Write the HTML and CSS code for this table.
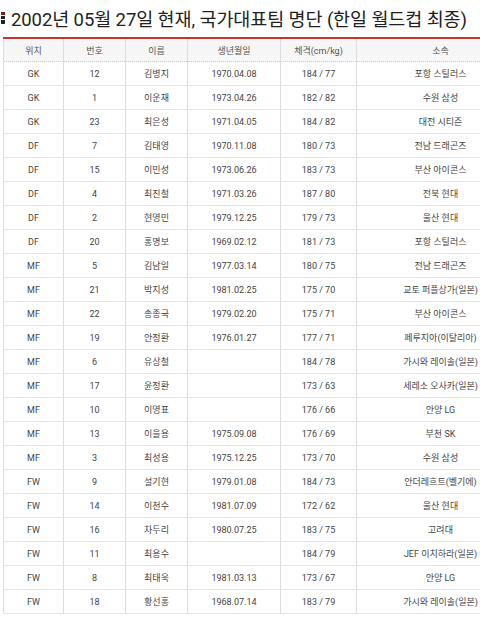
FILE: index.html
```html
<!DOCTYPE html>
<html lang="ko">
<head>
<meta charset="utf-8">
<link rel="stylesheet" href="styles.css">
</head>
<body>
<div class="page">
  <h1 class="title"><span class="bullet"></span>2002년 05월 27일 현재, 국가대표팀 명단 (한일 월드컵 최종)</h1>
  <table class="roster">
    <colgroup>
      <col class="c1"><col class="c2"><col class="c3"><col class="c4"><col class="c5"><col class="c6">
    </colgroup>
    <thead>
      <tr><th>위치</th><th>번호</th><th>이름</th><th>생년월일</th><th>체격(cm/kg)</th><th>소속</th></tr>
    </thead>
    <tbody>
      <tr><td>GK</td><td>12</td><td>김병지</td><td>1970.04.08</td><td>184 / 77</td><td>포항 스틸러스</td></tr>
      <tr><td>GK</td><td>1</td><td>이운재</td><td>1973.04.26</td><td>182 / 82</td><td>수원 삼성</td></tr>
      <tr><td>GK</td><td>23</td><td>최은성</td><td>1971.04.05</td><td>184 / 82</td><td>대전 시티즌</td></tr>
      <tr><td>DF</td><td>7</td><td>김태영</td><td>1970.11.08</td><td>180 / 73</td><td>전남 드래곤즈</td></tr>
      <tr><td>DF</td><td>15</td><td>이민성</td><td>1973.06.26</td><td>183 / 73</td><td>부산 아이콘스</td></tr>
      <tr><td>DF</td><td>4</td><td>최진철</td><td>1971.03.26</td><td>187 / 80</td><td>전북 현대</td></tr>
      <tr><td>DF</td><td>2</td><td>현영민</td><td>1979.12.25</td><td>179 / 73</td><td>울산 현대</td></tr>
      <tr><td>DF</td><td>20</td><td>홍명보</td><td>1969.02.12</td><td>181 / 73</td><td>포항 스틸러스</td></tr>
      <tr><td>MF</td><td>5</td><td>김남일</td><td>1977.03.14</td><td>180 / 75</td><td>전남 드래곤즈</td></tr>
      <tr><td>MF</td><td>21</td><td>박지성</td><td>1981.02.25</td><td>175 / 70</td><td>교토 퍼플상가(일본)</td></tr>
      <tr><td>MF</td><td>22</td><td>송종국</td><td>1979.02.20</td><td>175 / 71</td><td>부산 아이콘스</td></tr>
      <tr><td>MF</td><td>19</td><td>안정환</td><td>1976.01.27</td><td>177 / 71</td><td>페루지아(이탈리아)</td></tr>
      <tr><td>MF</td><td>6</td><td>유상철</td><td></td><td>184 / 78</td><td>가시와 레이솔(일본)</td></tr>
      <tr><td>MF</td><td>17</td><td>윤정환</td><td></td><td>173 / 63</td><td>세레소 오사카(일본)</td></tr>
      <tr><td>MF</td><td>10</td><td>이영표</td><td></td><td>176 / 66</td><td>안양 LG</td></tr>
      <tr><td>MF</td><td>13</td><td>이을용</td><td>1975.09.08</td><td>176 / 69</td><td>부천 SK</td></tr>
      <tr><td>MF</td><td>3</td><td>최성용</td><td>1975.12.25</td><td>173 / 70</td><td>수원 삼성</td></tr>
      <tr><td>FW</td><td>9</td><td>설기현</td><td>1979.01.08</td><td>184 / 73</td><td>안더레흐트(벨기에)</td></tr>
      <tr><td>FW</td><td>14</td><td>이천수</td><td>1981.07.09</td><td>172 / 62</td><td>울산 현대</td></tr>
      <tr><td>FW</td><td>16</td><td>차두리</td><td>1980.07.25</td><td>183 / 75</td><td>고려대</td></tr>
      <tr><td>FW</td><td>11</td><td>최용수</td><td></td><td>184 / 79</td><td>JEF 이치하라(일본)</td></tr>
      <tr><td>FW</td><td>8</td><td>최태욱</td><td>1981.03.13</td><td>173 / 67</td><td>안양 LG</td></tr>
      <tr><td>FW</td><td>18</td><td>황선홍</td><td>1968.07.14</td><td>183 / 79</td><td>가시와 레이솔(일본)</td></tr>
    </tbody>
  </table>
</div>
</body>
</html>
```
FILE: styles.css
```css
html, body {
  margin: 0;
  padding: 0;
  background: #fff;
}
body {
  width: 480px;
  height: 620px;
  overflow: hidden;
  font-family: Roboto, "Noto Sans CJK KR", sans-serif;
}
.page {
  width: 540px;
  padding-left: 3px;
}
.title {
  display: flex;
  align-items: center;
  height: 37px;
  margin: 0 0 0 -2px;
  font-size: 18.5px;
  font-weight: 400;
  color: #222;
  letter-spacing: -0.1px;
  box-sizing: border-box;
  padding-bottom: 2px;
  white-space: nowrap;
}
.bullet {
  display: inline-block;
  flex: none;
  width: 4px;
  height: 12px;
  margin-right: 6px;
  background: linear-gradient(#7a1a1a 0, #7a1a1a 3px, #fff 3px, #fff 4px, #222 4px, #222 7px, #fff 7px, #fff 8px, #222 8px);
}
.roster {
  border-collapse: collapse;
  table-layout: fixed;
  width: 521px;
  border-top: 2px solid #c8342f;
  border-left: 1px solid #ddd;
  border-bottom: 1px solid #ddd;
}
.c1 { width: 60px; }
.c2 { width: 62px; }
.c3 { width: 62px; }
.c4 { width: 93px; }
.c5 { width: 76px; }
.c6 { width: 168px; }
.roster th {
  height: 22px;
  padding: 0;
  background: #f6f6f6;
  font-size: 9px;
  font-weight: 400;
  color: #555;
  text-align: center;
  border-right: 1px solid #ddd;
  border-bottom: 1px dotted #ccc;
}
.roster td {
  height: 23px;
  padding: 0;
  font-size: 9px;
  color: #444;
  text-align: center;
  border-right: 1px solid #ddd;
  border-bottom: 1px solid #e2e2e2;
  white-space: nowrap;
}
```
